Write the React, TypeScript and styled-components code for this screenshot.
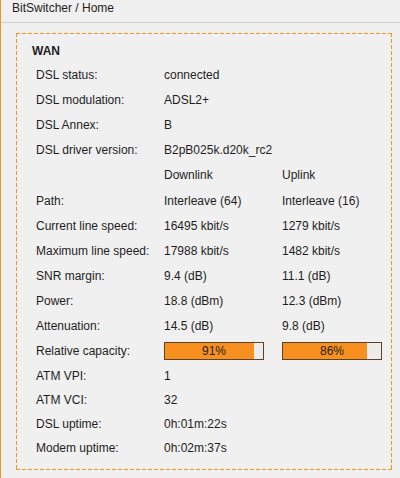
import styled, { createGlobalStyle } from 'styled-components';

const orange = '#f7931e';

const GlobalStyle = createGlobalStyle`
  html, body {
    margin: 0;
    padding: 0;
    background: #f0f0f0;
  }
  body {
    font-family: 'Liberation Sans', Arial, sans-serif;
    color: #1e1e1e;
  }
`;

const Page = styled.div`
  width: 400px;
  height: 478px;
  box-sizing: border-box;
  border-left: 1px solid ${orange};
  overflow: hidden;
`;

const Header = styled.div`
  height: 22px;
  line-height: 16px;
  padding-left: 11px;
  font-size: 12px;
  border-bottom: 1px solid #cdcdcd;
`;

// dashed frame drawn with gradients: 4px dash, 2px gap
const hDash = `repeating-linear-gradient(90deg, ${orange} 0 4px, transparent 4px 6px)`;
const vDash = `repeating-linear-gradient(180deg, ${orange} 0 4px, transparent 4px 6px)`;

const Panel = styled.div`
  margin: 10px 0 0 15px;
  width: 376px;
  box-sizing: border-box;
  padding: 10px 0 10px 16px;
  background:
    ${hDash} left top / 100% 1px no-repeat,
    ${hDash} left bottom / 100% 1px no-repeat,
    ${vDash} left top / 1px 100% no-repeat,
    ${vDash} right top / 1px 100% no-repeat;
`;

const Title = styled.div`
  font-size: 12px;
  font-weight: bold;
  line-height: 16px;
  margin-bottom: 3px;
`;

const Table = styled.div`
  display: grid;
  grid-template-columns: 128px 118px 1fr;
  padding-left: 4px;
  font-size: 12px;
`;

const Cell = styled.div<{ $h: number }>`
  height: ${(p) => p.$h}px;
  display: flex;
  align-items: center;
  white-space: nowrap;
`;

const Bar = styled.div`
  position: relative;
  width: 100px;
  height: 18px;
  box-sizing: border-box;
  border: 1px solid #5f4128;
  background: #ececec;
`;

const Fill = styled.div`
  height: 100%;
  background: #f7901e;
`;

const BarText = styled.span`
  position: absolute;
  inset: 0;
  display: flex;
  align-items: center;
  justify-content: center;
  font-size: 12px;
  color: #1e1e1e;
`;

type Row = { label: string; down?: string; up?: string; h?: number; bar?: [number, number] };

const rows: Row[] = [
  { label: 'DSL status:', down: 'connected' },
  { label: 'DSL modulation:', down: 'ADSL2+' },
  { label: 'DSL Annex:', down: 'B' },
  { label: 'DSL driver version:', down: 'B2pB025k.d20k_rc2' },
  { label: '', down: 'Downlink', up: 'Uplink', h: 26 },
  { label: 'Path:', down: 'Interleave (64)', up: 'Interleave (16)' },
  { label: 'Current line speed:', down: '16495 kbit/s', up: '1279 kbit/s' },
  { label: 'Maximum line speed:', down: '17988 kbit/s', up: '1482 kbit/s' },
  { label: 'SNR margin:', down: '9.4 (dB)', up: '11.1 (dB)' },
  { label: 'Power:', down: '18.8 (dBm)', up: '12.3 (dBm)' },
  { label: 'Attenuation:', down: '14.5 (dB)', up: '9.8 (dB)' },
  { label: 'Relative capacity:', bar: [91, 86], h: 26 },
  { label: 'ATM VPI:', down: '1', h: 24 },
  { label: 'ATM VCI:', down: '32', h: 24 },
  { label: 'DSL uptime:', down: '0h:01m:22s', h: 24 },
  { label: 'Modem uptime:', down: '0h:02m:37s', h: 24 },
];

const Capacity = ({ value }: { value: number }) => (
  <Bar>
    <Fill style={{ width: `${value}%` }} />
    <BarText>{value}%</BarText>
  </Bar>
);

export default function App() {
  return (
    <>
      <GlobalStyle />
      <Page>
        <Header>BitSwitcher / Home</Header>
        <Panel>
          <Title>WAN</Title>
          <Table>
            {rows.map((r, i) => {
              const h = r.h ?? 25;
              return (
                <div key={i} style={{ display: 'contents' }}>
                  <Cell $h={h}>{r.label}</Cell>
                  <Cell $h={h}>{r.bar ? <Capacity value={r.bar[0]} /> : r.down}</Cell>
                  <Cell $h={h}>{r.bar ? <Capacity value={r.bar[1]} /> : r.up}</Cell>
                </div>
              );
            })}
          </Table>
        </Panel>
      </Page>
    </>
  );
}
